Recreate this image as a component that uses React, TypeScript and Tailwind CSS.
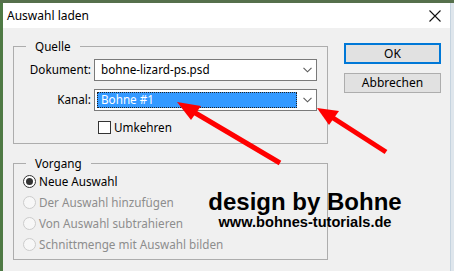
import React from 'react';

const font = { fontFamily: '"Noto Sans", "Liberation Sans", sans-serif' };

function Chevron() {
  return (
    <svg width="9" height="6" viewBox="0 0 9 6" className="shrink-0">
      <path d="M0.5 0.8 L4.5 4.8 L8.5 0.8" fill="none" stroke="#5a5a5a" strokeWidth="1.1" />
    </svg>
  );
}

function Radio({ label, checked, disabled }: { label: string; checked?: boolean; disabled?: boolean }) {
  return (
    <div className="flex h-[21px] items-center">
      <span
        className={
          'flex h-[13px] w-[13px] items-center justify-center rounded-full border ' +
          (disabled ? 'border-[#cccccc] bg-[#f7f7f7]' : 'border-[#333333] bg-white')
        }
      >
        {checked && <span className="h-[7px] w-[7px] rounded-full bg-[#333333]" />}
      </span>
      <span className={'ml-[3px] ' + (disabled ? 'text-[#8d8d8d]' : 'text-black')}>{label}</span>
    </div>
  );
}

export default function App() {
  return (
    <div className="relative h-[271px] w-[454px] overflow-hidden bg-[#dfe6ec] text-[11.7px] leading-none" style={font}>
      <div className="absolute left-0 top-0 h-full w-[3px] bg-[#4f7a45]" />
      <div className="absolute left-0 top-0 h-[3px] w-full bg-[#56704c]" />

      <div className="ml-[3px] mt-[3px] flex h-[268px] w-[448px] flex-col border-r border-[#c5d3df] bg-[#f0f0f0]">
        {/* title bar */}
        <div className="flex h-[25px] shrink-0 items-center justify-between bg-white pl-[4px] pr-[9px]">
          <span className="text-[12px] text-black">Auswahl laden</span>
          <svg width="12" height="12" viewBox="0 0 12 12">
            <path d="M0.5 0.5 L11.5 11.5 M11.5 0.5 L0.5 11.5" stroke="#111" strokeWidth="1.1" />
          </svg>
        </div>

        <div className="flex pl-[10px] pt-[10px]">
          {/* left column */}
          <div className="flex w-[315px] flex-col">
            <fieldset className="h-[106px] border border-[#adadad] pb-[10px]">
              <legend className="ml-[12px] px-[9px] leading-[16px]">Quelle</legend>
              <div className="mt-[5px] flex items-center">
                <span className="w-[77px] text-right">Dokument:</span>
                <div className="ml-[3px] flex h-[22px] w-[223px] items-center justify-between border border-[#7a7a7a] bg-white pl-[6px] pr-[4px]">
                  <span>bohne-lizard-ps.psd</span>
                  <Chevron />
                </div>
              </div>
              <div className="mt-[8px] flex items-center">
                <span className="w-[77px] text-right">Kanal:</span>
                <div className="ml-[3px] flex h-[22px] w-[223px] items-center justify-between border border-[#7a7a7a] bg-white pl-[2px] pr-[4px]">
                  <div className="flex h-[16px] w-[200px] items-center border border-dotted border-[#222] bg-[#3399ff] pl-[3px] text-white">
                    Bohne #1
                  </div>
                  <Chevron />
                </div>
              </div>
              <div className="ml-[84px] mt-[10px] flex items-center">
                <span className="h-[13px] w-[13px] border border-[#333333] bg-white" />
                <span className="ml-[3px]">Umkehren</span>
              </div>
            </fieldset>

            <fieldset className="mt-[11px] border border-[#adadad] pb-[4px] pl-[9px]">
              <legend className="ml-[3px] px-[9px] leading-[16px]">Vorgang</legend>
              <Radio label="Neue Auswahl" checked />
              <Radio label="Der Auswahl hinzufügen" disabled />
              <Radio label="Von Auswahl subtrahieren" disabled />
              <Radio label="Schnittmenge mit Auswahl bilden" disabled />
            </fieldset>
          </div>

          {/* buttons */}
          <div className="ml-[16px] mt-[5px] flex flex-col gap-[9px]">
            <button className="h-[21px] w-[97px] border-2 border-[#0078d7] bg-[#e1e1e1] text-[12px] text-black">OK</button>
            <button className="h-[20px] w-[97px] border border-[#adadad] bg-[#e1e1e1] text-[12px] text-black">Abbrechen</button>
          </div>
        </div>
      </div>

      {/* watermark */}
      <div
        className="absolute left-[198px] top-[189px] w-[214px] text-center font-bold text-black"
        style={{ fontFamily: '"Liberation Sans", Arial, sans-serif' }}
      >
        <div className="text-[24px] leading-[26px]">design by Bohne</div>
        <div className="mt-[-2px] text-[14.6px] leading-[18px]">www.bohnes-tutorials.de</div>
      </div>

      {/* red arrows */}
      <svg className="pointer-events-none absolute left-0 top-0" width="454" height="271" viewBox="0 0 454 271">
        <line x1="280" y1="163" x2="192" y2="111" stroke="#ff0000" strokeWidth="5" />
        <polygon points="177,102 201,106 191,120" fill="#ff0000" />
        <line x1="386" y1="152" x2="330" y2="116" stroke="#ff0000" strokeWidth="5" />
        <polygon points="317,108 339,111 329,125" fill="#ff0000" />
      </svg>
    </div>
  );
}
